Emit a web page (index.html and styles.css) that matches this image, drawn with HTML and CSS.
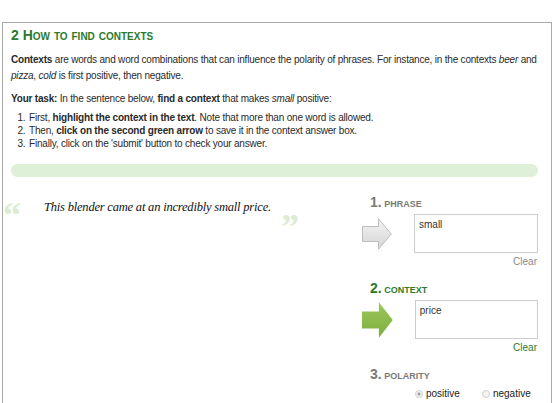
FILE: index.html
```html
<!DOCTYPE html>
<html lang="en">
<head>
<meta charset="UTF-8" />
<title>How to find contexts</title>
<link rel="stylesheet" href="styles.css">
</head>
<body>
<div class="panel">
  <h2 class="step-title">2 How to find contexts</h2>
  <p><b>Contexts</b> are words and word combinations that can influence the polarity of phrases. For instance, in the contexts <i>beer</i> and <i>pizza</i>, <i>cold</i> is first positive, then negative.</p>
  <p><b>Your task:</b> In the sentence below, <b>find a context</b> that makes <i>small</i> positive:</p>
  <ol class="steps">
    <li>First, <b>highlight the context in the text</b>. Note that more than one word is allowed.</li>
    <li>Then, <b>click on the second green arrow</b> to save it in the context answer box.</li>
    <li>Finally, click on the 'submit' button to check your answer.</li>
  </ol>
  <div class="progress"></div>

  <div class="work">
    <div class="sentence">
      <span class="quote open">&ldquo;</span>
      <span class="text">This blender came at an incredibly small price.</span>
      <span class="quote close">&rdquo;</span>
    </div>

    <div class="answers">
      <div class="field">
        <div class="label"><span class="num">1.</span> Phrase</div>
        <div class="row">
          <svg class="arrow" width="30" height="32" viewBox="0 0 30 32">
            <defs>
              <linearGradient id="grey" x1="0" y1="0" x2="0" y2="1">
                <stop offset="0" stop-color="#f4f4f4"/>
                <stop offset="1" stop-color="#d4d4d4"/>
              </linearGradient>
            </defs>
            <path d="M0.5 8.5 H16.5 V0.8 L29.3 16 L16.5 31.2 V23.5 H0.5 Z" fill="url(#grey)" stroke="#bdbdbd"/>
          </svg>
          <div class="box">small</div>
        </div>
        <div class="clear">Clear</div>
      </div>

      <div class="field active">
        <div class="label"><span class="num">2.</span> Context</div>
        <div class="row">
          <svg class="arrow" width="31" height="36" viewBox="0 0 31 36">
            <defs>
              <linearGradient id="green" x1="0" y1="0" x2="0" y2="1">
                <stop offset="0" stop-color="#9cc75a"/>
                <stop offset="1" stop-color="#7fae3e"/>
              </linearGradient>
            </defs>
            <path d="M0 9.5 H17 V0 L31 18 L17 36 V26.5 H0 Z" fill="url(#green)"/>
          </svg>
          <div class="box">price</div>
        </div>
        <div class="clear">Clear</div>
      </div>

      <div class="field">
        <div class="label"><span class="num">3.</span> Polarity</div>
        <div class="choices">
          <label><span class="radio on"></span>positive</label>
          <label><span class="radio"></span>negative</label>
        </div>
      </div>
    </div>
  </div>
</div>
</body>
</html>
```

FILE: styles.css
```css
* {
  box-sizing: border-box;
}
body {
  margin: 0;
  background: #fff;
  font-family: "Liberation Sans", Arial, sans-serif;
  font-size: 10px;
  letter-spacing: -0.2px;
  color: #2a2a2a;
}
.panel {
  margin: 22px 4px 0 2px;
  height: 400px;
  border: 1px solid #a8a8a8;
  border-bottom: none;
  padding: 4px 13px 0 8px;
}
.step-title {
  margin: 0 0 9px;
  font-size: 14px;
  letter-spacing: 0;
  font-variant: small-caps;
  font-weight: bold;
  color: #2d7a2d;
}
p {
  margin: 0 0 7px;
  line-height: 16px;
}
.steps {
  margin: 0;
  padding-left: 17px;
  line-height: 13px;
}
.steps li {
  padding-left: 1px;
}
.progress {
  margin: 14px 0 0;
  height: 13px;
  border-radius: 7px;
  background: #dff0d8;
}
p + .steps {
  margin-top: -3px;
}

.work {
  display: grid;
  grid-template-columns: 1fr 176px;
}
.sentence {
  position: relative;
  height: 60px;
}
.sentence .text {
  position: absolute;
  left: 33px;
  top: 23px;
  font-family: "Liberation Serif", serif;
  font-style: italic;
  font-size: 12.5px;
  letter-spacing: -0.2px;
  color: #111;
}
.quote {
  position: absolute;
  font-family: "Liberation Serif", serif;
  font-weight: bold;
  font-size: 36px;
  color: #dcebd2;
  line-height: 1;
}
.quote.open {
  left: -8px;
  top: 20px;
}
.quote.close {
  left: 270px;
  top: 32px;
}

.answers {
  padding-top: 18px;
}
.label {
  font-size: 9px;
  font-weight: bold;
  text-transform: uppercase;
  letter-spacing: 0;
  color: #7a7a7a;
  padding-left: 8px;
  line-height: 14px;
}
.label .num {
  font-size: 14px;
}
.field.active .label {
  color: #2d7a2d;
}
.row {
  display: flex;
  align-items: center;
  gap: 22px;
  height: 39px;
  margin-top: 3px;
}
.box {
  width: 124px;
  height: 39px;
  border: 1px solid #ccc;
  padding: 4px 4px;
  letter-spacing: 0;
  color: #333;
}
.clear {
  text-align: right;
  padding-right: 1px;
  margin: 3px 0 13px;
  line-height: 12px;
  letter-spacing: 0;
  color: #8a8a8a;
}
.field.active .clear {
  color: #2d7a2d;
}
.choices {
  display: flex;
  gap: 22px;
  padding-left: 53px;
  margin-top: 5px;
}
.choices label {
  display: flex;
  align-items: center;
  gap: 3px;
  letter-spacing: 0;
  color: #222;
}
.radio {
  width: 8px;
  height: 8px;
  border-radius: 50%;
  border: 1px solid #d0d0d0;
  background: #f4f4f4;
}
.radio.on {
  background: radial-gradient(circle, #9a9a9a 0 1.2px, #f4f4f4 1.8px);
}
```
